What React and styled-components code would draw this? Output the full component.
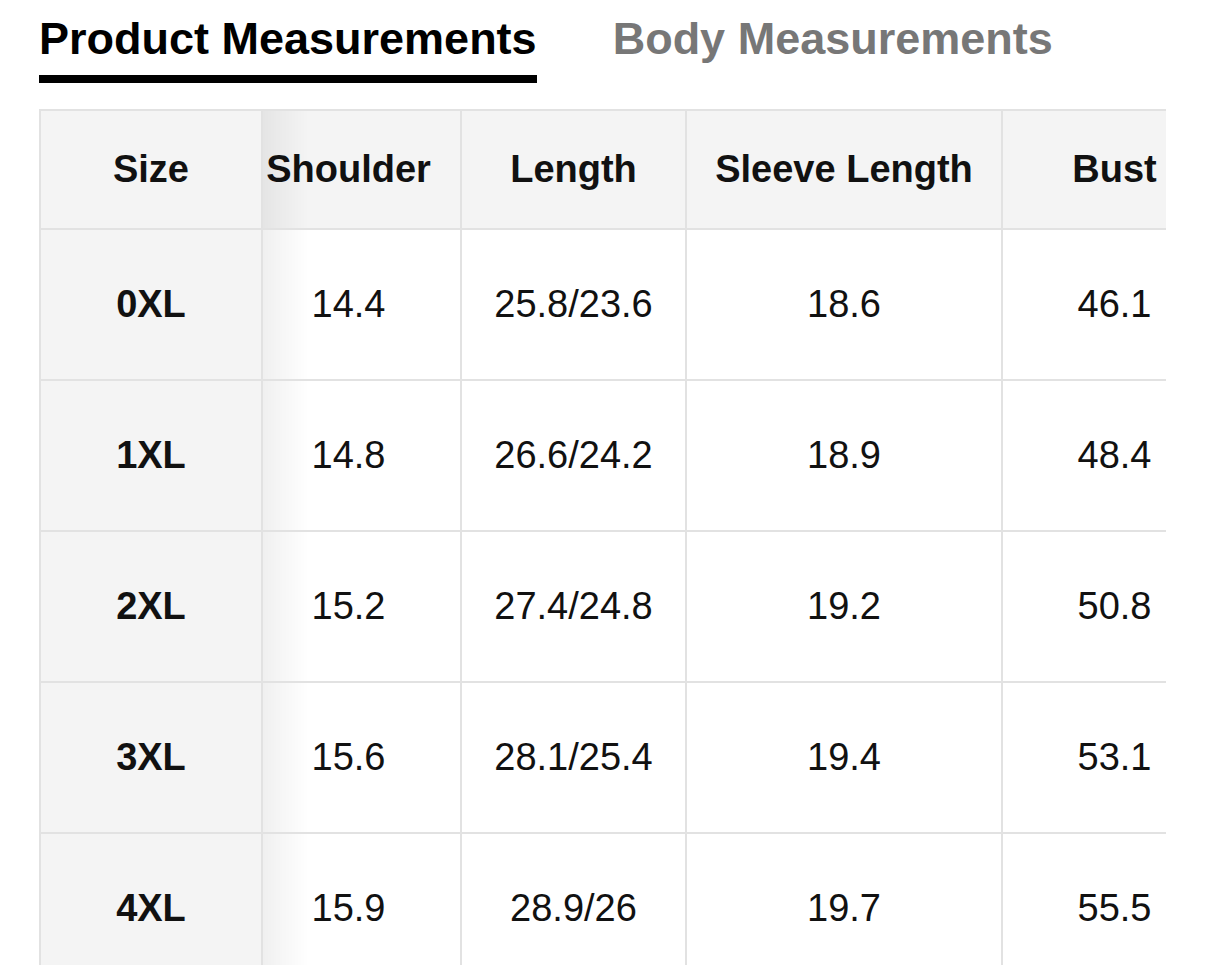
import React, { useLayoutEffect, useRef, useState } from "react";
import styled, { createGlobalStyle } from "styled-components";

const GlobalStyle = createGlobalStyle`
  body {
    margin: 0;
    background: #fff;
    font-family: "Liberation Sans", Arial, Helvetica, sans-serif;
  }
`;

const rows = [
  { size: "0XL", shoulder: "14.4", length: "25.8/23.6", sleeve: "18.6", bust: "46.1" },
  { size: "1XL", shoulder: "14.8", length: "26.6/24.2", sleeve: "18.9", bust: "48.4" },
  { size: "2XL", shoulder: "15.2", length: "27.4/24.8", sleeve: "19.2", bust: "50.8" },
  { size: "3XL", shoulder: "15.6", length: "28.1/25.4", sleeve: "19.4", bust: "53.1" },
  { size: "4XL", shoulder: "15.9", length: "28.9/26", sleeve: "19.7", bust: "55.5" },
];

const SizeChart = () => {
  const [activeTab, setActiveTab] = useState("product");
  const scrollRef = useRef(null);

  useLayoutEffect(() => {
    if (scrollRef.current) scrollRef.current.scrollLeft = 26;
  }, []);

  return (
    <Page>
      <GlobalStyle />
      <Tabs>
        <Tab active={activeTab === "product"} onClick={() => setActiveTab("product")}>
          Product Measurements
        </Tab>
        <Tab active={activeTab === "body"} onClick={() => setActiveTab("body")}>
          Body Measurements
        </Tab>
      </Tabs>

      <Scroller ref={scrollRef}>
        <Table>
          <thead>
            <tr>
              <HeadCell sticky width={224}>Size</HeadCell>
              <HeadCell width={225}>Shoulder</HeadCell>
              <HeadCell width={225}>Length</HeadCell>
              <HeadCell width={316}>Sleeve Length</HeadCell>
              <HeadCell width={225}>Bust</HeadCell>
            </tr>
          </thead>
          <tbody>
            {rows.map((row) => (
              <tr key={row.size}>
                <Cell sticky>{row.size}</Cell>
                <Cell>{row.shoulder}</Cell>
                <Cell>{row.length}</Cell>
                <Cell>{row.sleeve}</Cell>
                <Cell>{row.bust}</Cell>
              </tr>
            ))}
          </tbody>
        </Table>
      </Scroller>
    </Page>
  );
};

const Page = styled.div`
  padding: 13px 0 0 39px;
`;

const Tabs = styled.div`
  display: flex;
  gap: 76px;
`;

const Tab = styled.div`
  font-size: 45px;
  line-height: 52px;
  font-weight: bold;
  color: ${(props) => (props.active ? "#000" : "#777")};
  padding-bottom: 10px;
  border-bottom: 8px solid ${(props) => (props.active ? "#000" : "transparent")};
  cursor: pointer;
  white-space: nowrap;
`;

const Scroller = styled.div`
  margin-top: 26px;
  width: 1127px;
  overflow-x: auto;
  scrollbar-width: none;

  &::-webkit-scrollbar {
    display: none;
  }
`;

const Table = styled.table`
  table-layout: fixed;
  width: 1215px;
  border-collapse: separate;
  border-spacing: 0;
  font-size: 38px;
  color: #111;
`;

const stickyStyles = `
  position: sticky;
  left: 0;
  z-index: 2;
  background: #f4f4f4;
  font-weight: bold;
  border-left: 2px solid #e2e2e2;

  &::after {
    content: "";
    position: absolute;
    top: 0;
    bottom: 0;
    right: -47px;
    width: 45px;
    background: linear-gradient(to right, rgba(0, 0, 0, 0.06), rgba(0, 0, 0, 0));
    pointer-events: none;
  }
`;

const HeadCell = styled.th`
  box-sizing: border-box;
  width: ${(props) => props.width}px;
  height: 121px;
  padding: 0;
  background: #f4f4f4;
  font-weight: bold;
  text-align: center;
  vertical-align: middle;
  white-space: nowrap;
  border-top: 2px solid #e2e2e2;
  border-right: 2px solid #e2e2e2;
  border-bottom: 2px solid #e2e2e2;
  ${(props) => (props.sticky ? stickyStyles : "")}
`;

const Cell = styled.td`
  box-sizing: border-box;
  height: 151px;
  padding: 0;
  background: #fff;
  font-weight: normal;
  text-align: center;
  vertical-align: middle;
  white-space: nowrap;
  border-right: 2px solid #e2e2e2;
  border-bottom: 2px solid #e2e2e2;
  ${(props) => (props.sticky ? stickyStyles : "")}
`;

export default SizeChart;
